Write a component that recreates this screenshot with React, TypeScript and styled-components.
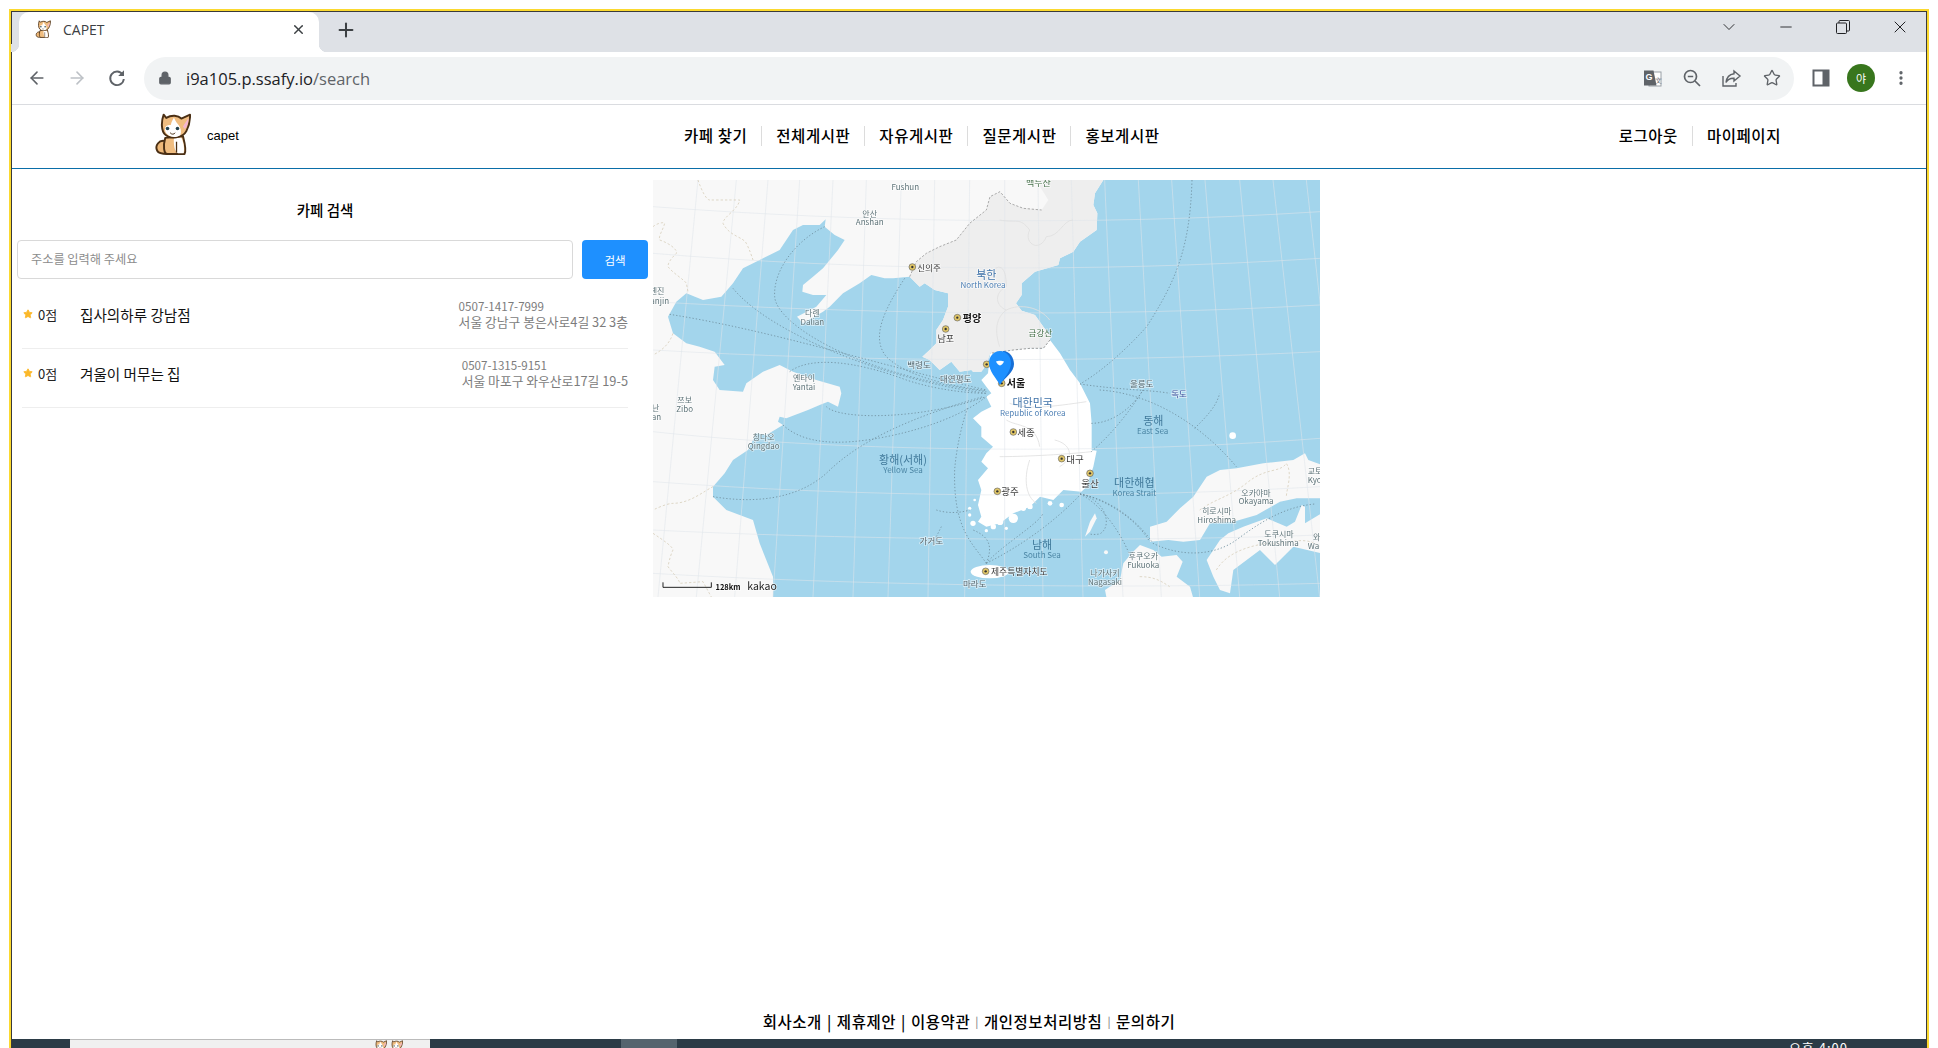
import React from 'react';
import styled, { createGlobalStyle } from 'styled-components';
import { ArrowLeft, ArrowRight, ChevronDown, Lock, Minus, MoreVertical, Plus, Star, X } from 'lucide-react';

const GlobalStyle = createGlobalStyle`
  html, body {
    margin: 0;
    padding: 0;
    height: 100%;
    overflow: hidden;
    background: #ffffff;
  }
  * {
    box-sizing: border-box;
  }
`;

const KR = `'Noto Sans CJK KR', 'Liberation Sans', sans-serif`;

const Outer = styled.div`
  width: 1920px;
  height: 1039px;
  margin: 9px 0 0 9px;
  border: 2px solid #fbd92f;
  border-bottom: 0;
`;

const Inner = styled.div`
  height: 100%;
  display: flex;
  flex-direction: column;
  border: 1px solid #3a3a3a;
  border-bottom: 0;
  background: #fff;
`;

const TabStrip = styled.div`
  height: 40px;
  flex: none;
  display: flex;
  align-items: flex-end;
  padding-left: 7px;
  background: #dee1e6;
`;

const Tab = styled.div`
  position: relative;
  width: 300px;
  height: 40px;
  display: flex;
  align-items: center;
  padding: 0 13px 6px 16px;
  background: #fff;
  border-radius: 10px 10px 0 0;
  font: 14px 'Open Sans', sans-serif;
  color: #3c4043;

  &::before,
  &::after {
    content: '';
    position: absolute;
    bottom: 0;
    width: 8px;
    height: 8px;
  }
  &::before {
    left: -8px;
    background: radial-gradient(circle at 0 0, #dee1e6 8px, #fff 8.5px);
  }
  &::after {
    right: -8px;
    background: radial-gradient(circle at 100% 0, #dee1e6 8px, #fff 8.5px);
  }
`;

const TabTitle = styled.span`
  flex: 1;
  margin-left: 12px;
`;

const NewTab = styled.div`
  width: 40px;
  height: 36px;
  margin: -5px 0 0 7px;
  align-self: center;
  display: flex;
  align-items: center;
  justify-content: center;
  color: #3c4043;
`;

const WindowControls = styled.div`
  margin: 0 -2px 0 auto;
  align-self: flex-start;
  height: 30px;
  display: flex;
  align-items: center;
  color: #202124;
`;

const WindowButton = styled.div`
  width: 57px;
  display: flex;
  justify-content: center;
`;

const Toolbar = styled.div`
  height: 53px;
  flex: none;
  display: flex;
  align-items: center;
  padding: 0 3px 0 5px;
  background: #fff;
  border-bottom: 1px solid #dadce0;
  color: #5f6368;
`;

const ToolButton = styled.div<{ $muted?: boolean }>`
  width: 40px;
  height: 36px;
  flex: none;
  display: flex;
  align-items: center;
  justify-content: center;
  color: ${(p) => (p.$muted ? '#bdc1c6' : '#5f6368')};
`;

const Omnibox = styled.div`
  width: 1650px;
  height: 43px;
  flex: none;
  margin: 0 7px;
  padding: 0 2px 0 14px;
  display: flex;
  align-items: center;
  background: #f1f3f4;
  border-radius: 22px;
`;

const Url = styled.div`
  flex: 1;
  margin-left: 14px;
  font: 16.5px 'Open Sans', sans-serif;
  color: #202124;

  span {
    color: #5f6368;
  }
`;

const Avatar = styled.div`
  width: 28px;
  height: 28px;
  border-radius: 50%;
  display: flex;
  align-items: center;
  justify-content: center;
  background: #38761d;
  color: #fff;
  font: 11px ${KR};
`;

const SiteHeader = styled.header`
  height: 64px;
  flex: none;
  display: flex;
  align-items: center;
  justify-content: space-between;
  padding: 0 131px 2px 143px;
  border-bottom: 1px solid #0a6ea8;
  font-family: ${KR};
  color: #000;
`;

const Brand = styled.div`
  display: flex;
  align-items: center;
  gap: 16px;
  font: 13px 'Liberation Sans', sans-serif;
`;

const BrandLogo = styled.div`
  display: flex;
  margin: -4px 0 0 -1px;
`;

const NavList = styled.nav`
  display: flex;
  align-items: center;
`;

const NavItem = styled.a`
  height: 20px;
  padding: 0 14px 2px;
  display: flex;
  align-items: center;
  font-size: 15.5px;
  font-weight: 500;
  letter-spacing: 0.55px;
  border-right: 1px solid #dcdcdc;

  &:last-child {
    border-right: 0;
  }
`;

const Main = styled.main`
  flex: 1;
  min-height: 0;
  display: flex;
  align-items: flex-start;
  padding-top: 11px;
  font-family: ${KR};
`;

const SearchPanel = styled.section`
  width: 641px;
  flex: none;
`;

const PanelTitle = styled.h2`
  margin: 0;
  height: 60px;
  padding: 20px 15px 0 0;
  text-align: center;
  font-size: 14.5px;
  line-height: 20px;
  font-weight: 500;
  color: #000;
`;

const SearchRow = styled.div`
  display: flex;
  gap: 9px;
  padding: 0 5px;
`;

const AddressInput = styled.input`
  width: 556px;
  height: 39px;
  padding: 0 12px 2px 13px;
  border: 1px solid #d9d9d9;
  border-radius: 4px;
  outline: none;
  font: 12.2px ${KR};

  &::placeholder {
    color: #8c8c8c;
  }
`;

const SearchButton = styled.button`
  width: 66px;
  height: 39px;
  padding: 0;
  border: 0;
  border-radius: 4px;
  background: #1e90ff;
  color: #fff;
  font: 11.5px ${KR};
`;

const ResultList = styled.ul`
  list-style: none;
  margin: 11px 25px 0 10px;
  padding: 0;
`;

const ResultRow = styled.li`
  height: 59px;
  display: flex;
  align-items: center;
  padding-bottom: 10px;
  border-bottom: 1px solid #eeeeee;
`;

const Rating = styled.div`
  width: 58px;
  display: flex;
  align-items: center;
  gap: 5px;
  padding-left: 1px;
  font-size: 13px;
  color: #222;
`;

const CafeName = styled.div`
  flex: 1;
  font-size: 14.6px;
  color: #111;
`;

const CafeInfo = styled.div`
  font-size: 12.8px;
  line-height: 15px;
  color: #7c7c7c;
`;

const CafePhone = styled.div`
  font-size: 11.6px;
`;

const MapFrame = styled.svg`
  width: 667px;
  height: 417px;
  flex: none;
  display: block;
  background: #a3d5ec;
  filter: blur(0.3px);
`;

const SiteFooter = styled.footer`
  height: 36px;
  flex: none;
  display: flex;
  align-items: flex-start;
  justify-content: center;
  font: 500 15.5px/36px ${KR};
  letter-spacing: 0.55px;
  color: #000;
`;

const FooterBar = styled.span<{ $light?: boolean }>`
  margin: 0 5px;
  color: ${(p) => (p.$light ? '#8a8a8a' : '#000')};
  font-size: ${(p) => (p.$light ? '11px' : 'inherit')};
`;

const Taskbar = styled.div`
  height: 9px;
  flex: none;
  display: flex;
  overflow: hidden;
  padding-left: 58px;
  background: #2b3b46;
`;

const TaskSearch = styled.div`
  width: 360px;
  height: 9px;
  display: flex;
  gap: 2px;
  padding-left: 303px;
  background: #f0f0f0;
  border-top: 1px solid #bbb;
`;

const TaskActive = styled.div`
  width: 56px;
  margin-left: 191px;
  background: #55646e;
`;

const TaskClock = styled.div`
  margin-left: auto;
  padding-right: 78px;
  font: 13px/17px ${KR};
  letter-spacing: 1px;
  color: #fff;
`;

const Cat = ({ width, height }: { width: number; height: number }) => (
  <svg width={width} height={height} viewBox="70 22 115 132">
    <g stroke="#4a2f14" strokeWidth="6" strokeLinejoin="round">
      <path d="M105 110C85 105 72 125 80 140C85 150 100 150 112 150Z" fill="#eeb878" />
      <path d="M105 100C98 125 100 150 112 150L165 150C172 140 165 115 160 95Z" fill="#f0bd80" />
      <path d="M132 100C130 120 135 148 145 148L162 148C166 130 160 110 155 100Z" fill="#fff" strokeWidth="0" />
      <path d="M100 28L108 38C125 28 145 30 155 40L182 28C183 55 175 70 170 80C160 100 120 105 105 90C92 78 92 50 100 28Z" fill="#f0bd80" />
    </g>
    <path d="M108 86C100 70 105 58 122 60C125 48 130 42 132 37C140 60 160 65 152 92C135 102 118 98 108 86Z" fill="#fff" />
    <path d="M160 65C165 55 174 45 177 38C178 55 170 70 165 72Z" fill="#f4b6d0" />
    <circle cx="112" cy="71" r="5.5" fill="#24414d" />
    <circle cx="143" cy="71" r="5.5" fill="#24414d" />
    <path d="M120 84C125 90 132 90 136 84" fill="none" stroke="#4a2f14" strokeWidth="3" />
    <path d="M140 112V146" stroke="#4a2f14" strokeWidth="4" />
  </svg>
);

const Reload = () => (
  <svg width="18" height="18" viewBox="0 0 18 18" fill="none">
    <path d="M14.6 5.4A6.8 6.8 0 1 0 15.8 10" stroke="#5f6368" strokeWidth="1.9" />
    <path d="M16 1.2V7h-5.8z" fill="#5f6368" />
  </svg>
);

const Translate = () => (
  <svg width="19" height="19" viewBox="0 0 19 19">
    <rect x="6" y="3" width="12" height="14" fill="#fff" stroke="#9aa0a6" />
    <path d="M1 1.5h9.5l3 15H1z" fill="#5f6368" />
    <text x="2.6" y="11" fontSize="9" fontWeight="700" fill="#fff" fontFamily="Liberation Sans">G</text>
    <text x="12" y="14" fontSize="6.5" fill="#5f6368" fontFamily="Liberation Sans">文</text>
  </svg>
);

const ZoomOutIcon = () => (
  <svg width="18" height="18" viewBox="0 0 18 18" fill="none" stroke="#5f6368" strokeWidth="1.7">
    <circle cx="7.5" cy="7.5" r="6" />
    <path d="M12 12l5 5M4.8 7.5h5.4" />
  </svg>
);

const ShareIcon = () => (
  <svg width="20" height="18" viewBox="0 0 20 18" fill="none" stroke="#5f6368" strokeWidth="1.4">
    <path d="M1 7v10h13v-3" />
    <path d="M12 2l6 5-6 5V9.2C8 9 5.5 10.5 4 13.5 4.6 8.5 7.5 5.4 12 4.8z" />
  </svg>
);

const SidePanelIcon = () => (
  <svg width="18" height="18" viewBox="0 0 18 18">
    <rect x="0.5" y="0.5" width="17" height="17" fill="#5f6368" />
    <rect x="2.5" y="2.5" width="8" height="13" fill="#fff" />
  </svg>
);

const RestoreIcon = () => (
  <svg width="14" height="14" viewBox="0 0 14 14" fill="none" stroke="#202124">
    <rect x="0.5" y="3" width="10" height="10.5" rx="1" />
    <path d="M3 3V1.5a1 1 0 0 1 1-1h8.5a1 1 0 0 1 1 1V10a1 1 0 0 1-1 1H10.5" />
  </svg>
);

// map data is in 3x map pixels, the group below scales it back down
const eastNorth = [[1351,0],[1326,40],[1321,75],[1333,100],[1331,150],[1281,185],[1261,215],[1221,235],[1216,255],[1146,275],[1106,310],[1106,345],[1089,370],[1106,392],[1146,405],[1171,440],[1192,468]];
const dmz = [[1191,480],[1171,505],[1131,505],[1081,510],[1011,520]];
const westNorth = [[1000,555],[985,575],[960,575],[955,570],[920,575],[895,545],[860,570],[830,540],[808,530],[830,510],[850,490],[850,450],[870,420],[885,380],[885,340],[845,330],[815,310],[800,320],[770,290]];
const yaluBorder = [[790,245],[820,220],[860,200],[910,180],[950,130],[1000,90],[1011,50],[1041,35],[1071,70],[1111,85],[1166,90],[1186,60],[1161,20],[1161,0]];
const chinaCoast = [[720,295],[695,295],[655,285],[620,310],[570,340],[530,380],[510,395],[450,430],[432,410],[490,380],[520,345],[480,345],[448,335],[450,315],[480,290],[510,265],[555,210],[575,180],[545,165],[515,140],[518,118],[500,135],[450,135],[420,150],[380,210],[320,240],[270,265],[240,310],[205,350],[150,360],[100,340],[70,365],[45,410],[60,460],[100,490],[140,500],[185,515],[215,555],[185,560],[180,600],[200,630],[270,635],[280,610],[330,575],[380,555],[420,575],[490,600],[560,620],[565,640],[555,680],[525,665],[500,675],[465,690],[400,715],[380,710],[375,725],[390,735],[340,765],[310,760],[285,810],[240,840],[215,880],[180,920],[180,950],[220,990],[300,1020],[320,1090],[360,1190],[360,1251]];
const eastSouth = [[1221,520],[1251,570],[1281,610],[1291,630],[1311,670],[1316,730],[1316,810],[1331,812],[1321,860],[1301,920],[1285,935],[1231,930],[1201,960],[1161,950],[1131,980],[1081,1000],[1041,1030],[1000,1040]];
const westSouth = [[975,1025],[985,1010],[975,975],[985,930],[975,900],[1005,865],[985,845],[1000,820],[1020,800],[985,770],[985,740],[960,715],[985,695],[1015,680],[1000,650],[1015,640],[1000,620],[985,600],[1005,580]];
const honshu = [[510,410],[560,395],[600,355],[640,320],[680,260],[720,240],[770,235],[850,220],[940,210],[975,190],[985,210],[1025,225],[1025,325],[950,325],[900,335],[830,375],[760,395],[690,400],[660,450],[610,455],[565,450],[510,455]];
const kyushu = [[480,465],[520,480],[545,500],[590,495],[608,515],[590,560],[630,590],[640,625],[380,625],[375,600],[420,570],[430,520],[455,490]];
const shikoku = [[680,510],[720,450],[745,430],[790,410],[860,385],[920,410],[945,395],[965,345],[975,350],[975,400],[1025,370],[1025,490],[940,470],[885,525],[840,480],[760,540],[750,610],[720,600],[700,560]];
const tsushima = [[345,370],[330,395],[315,440],[330,425],[350,385]];

const islets = [[1081,1015,14],[1041,1025,10],[1111,985,8],[1131,980,8],[1191,970,7],[1226,975,7],[1021,1040,8],[960,1030,8],[950,1005,5],[950,985,5],[965,960,4],[1060,1045,5],[1000,1052,5]];

const points = (pts: number[][], dx = 0, dy = 0) => pts.map(([x, y]) => `${x + dx},${y + dy}`).join(' ');

const landWest = [[0,0],...eastNorth,...dmz,...westNorth,...chinaCoast,[0,1251]];
const landNorth = [[770,290],...yaluBorder,...eastNorth,...dmz,...westNorth];
const landSouth = [...[...dmz].reverse(),...eastSouth,...westSouth];

const gridLines = [
  'M0 80C600 125 1300 140 2001 95',
  'M0 220C600 270 1300 280 2001 235',
  'M0 365C600 400 1300 415 2001 375',
  'M0 510C600 545 1300 550 2001 515',
  'M0 755C500 810 1300 830 2001 775',
  'M0 905C600 950 1300 960 2001 920',
  'M0 1050C500 1075 1300 1090 2001 1065',
  'M0 1180C500 1210 1300 1230 2001 1210',
];

const meridians = [[135,15],[250,130],[345,245],[440,360],[540,480],[640,600],[745,705],[845,825],[950,935],[1055,1055],[1155,1170],[1255,1290],[1355,1410],[1456,1525],[1556,1640],[1656,1760],[1760,1880],[1860,2000],[1960,2100]];

const seaRoutes = [
  'M240 325C350 460 700 600 1000 640',
  'M515 140C430 180 360 270 365 350C370 430 600 580 1000 635',
  'M50 403C350 450 700 560 1000 630',
  'M755 295C700 380 650 470 700 530C760 590 900 620 1000 632',
  'M410 575C470 530 600 540 760 600C850 630 950 640 1000 640',
  'M520 680C560 720 800 720 1000 650',
  'M390 735C450 790 550 800 700 770C850 740 950 690 1000 650',
  'M180 950C300 970 430 960 520 880C620 780 780 710 990 650',
  'M1000 1150C960 1090 900 1050 905 870C910 800 930 720 945 680',
  'M1000 1150C1020 1100 1010 1070 960 1050',
  'M1000 1150C1100 1100 1200 1030 1281 945',
  'M1000 1150C1040 1100 1160 1030 1170 1000',
  'M850 990C880 1000 920 1000 950 990',
  'M850 1070L865 1040',
  'M1617 0C1611 200 1571 300 1481 440C1401 530 1321 590 1281 612',
  'M1281 612C1400 630 1500 630 1550 640',
  'M1315 815C1380 760 1440 680 1470 630',
  'M1315 730C1380 730 1440 680 1470 630',
  'M1340 630C1500 640 1650 740 1750 860',
  'M1625 745C1660 710 1690 680 1700 640',
  'M1281 942C1380 960 1460 1030 1500 1090C1580 1130 1680 1130 1750 1080C1830 1020 1900 980 1985 972',
  'M1281 942C1340 970 1400 1050 1430 1125',
  'M1281 942C1360 960 1380 1040 1340 1062C1320 1065 1310 1062 1310 1062',
  'M1281 942C1330 950 1440 1000 1490 1085',
];

const provinceLines = [
  'M1040 120C1090 130 1100 110 1130 150C1110 190 1160 220 1180 170C1220 170 1230 120 1260 120',
  'M1000 290C1040 240 1060 260 1060 320C1020 340 1030 380 1060 390C1020 420 1030 470 1040 500',
  'M1060 390C1100 370 1160 380 1190 420',
  'M1070 670C1120 690 1200 680 1300 665',
  'M1040 830C1100 830 1220 825 1316 815',
  'M1130 840C1110 900 1120 950 1150 970',
  'M1205 780C1250 790 1270 830 1220 860',
  'M1060 720C1090 740 1150 730 1160 800',
];

const landBorders = [
  'M135 0C145 30 160 60 170 60C200 60 260 60 260 60C255 90 210 110 210 130C230 170 270 170 280 190C290 210 295 225 300 240',
  'M0 140C10 130 35 125 35 130C30 150 15 170 20 180C50 190 75 210 70 220C50 240 45 250 45 260C60 280 95 300 100 310L105 335',
  'M60 460C50 490 30 510 0 525',
  'M180 920C150 935 110 970 60 970C40 970 0 990 0 990',
  'M0 1060C30 1080 60 1100 60 1110C50 1130 45 1160 45 1160C60 1180 80 1200 80 1210L150 1205L175 1251',
  'M1640 990C1680 960 1730 950 1780 910C1840 860 1880 880 1900 850C1920 880 1900 930 1900 950',
  'M1690 1170C1720 1120 1780 1100 1840 1090C1890 1100 1950 1060 2001 1100',
  'M1460 1190C1500 1190 1520 1200 1550 1220',
];

type MapLabel = [string, number, number, number, string, number?];

const LAND = '#5f7479';
const CITY = '#3c3c3c';
const STATE = '#3f72a8';
const STATE_EN = '#4f80b5';
const SEA = '#40799a';
const SEA_EN = '#4b85a4';
const ISLE = '#55666e';

const mapLabels: MapLabel[] = [
  ['Fushun', 757, 18, 8, LAND],
  ['백두산', 1156, 8, 9, '#46704a'],
  ['안산', 650, 100, 8, LAND],
  ['Anshan', 650, 124, 8, LAND],
  ['신의주', 828, 261, 8.5, CITY],
  ['북한', 1000, 282, 11, STATE],
  ['North Korea', 990, 313, 8, STATE_EN],
  ['평양', 957, 413, 10, '#111', 700],
  ['남포', 878, 476, 9, CITY],
  ['다롄', 478, 397, 8, LAND],
  ['Dalian', 478, 423, 8, LAND],
  ['톈진', 12, 332, 8, LAND],
  ['anjin', 20, 360, 8, LAND],
  ['옌타이', 453, 592, 8, LAND],
  ['Yantai', 453, 618, 8, LAND],
  ['백령도', 798, 553, 8.5, ISLE],
  ['대연평도', 908, 593, 8.5, ISLE],
  ['금강산', 1162, 457, 8.5, '#46704a'],
  ['서울', 1089, 608, 10, '#111', 700],
  ['울릉도', 1466, 608, 8.5, ISLE],
  ['독도', 1578, 638, 8.5, '#3b4f9c'],
  ['쯔보', 95, 658, 8, LAND],
  ['Zibo', 95, 684, 8, LAND],
  ['난', 8, 682, 8, LAND],
  ['an', 10, 708, 8, LAND],
  ['칭다오', 332, 769, 8, LAND],
  ['Qingdao', 332, 796, 8, LAND],
  ['황해(서해)', 750, 838, 11, SEA],
  ['Yellow Sea', 750, 868, 8, SEA_EN],
  ['가거도', 835, 1080, 8.5, ISLE],
  ['마라도', 965, 1210, 8.5, ISLE],
  ['128km', 225, 1219, 7.5, '#111', 700],
  ['kakao', 327, 1216, 10.5, '#222'],
  ['대한민국', 1139, 666, 11, STATE],
  ['Republic of Korea', 1139, 698, 8, STATE_EN],
  ['세종', 1119, 756, 9.5, CITY],
  ['대구', 1266, 836, 9.5, CITY],
  ['울산', 1311, 908, 9.5, CITY],
  ['광주', 1071, 934, 9.5, CITY],
  ['동해', 1501, 720, 11, SEA],
  ['East Sea', 1499, 751, 8, SEA_EN],
  ['대한해협', 1444, 907, 11, SEA],
  ['Korea Strait', 1444, 938, 8, SEA_EN],
  ['남해', 1167, 1092, 11, SEA],
  ['South Sea', 1167, 1122, 8, SEA_EN],
  ['제주특별자치도', 1099, 1174, 8.8, CITY],
  ['후쿠오카', 1471, 1127, 8, LAND],
  ['Fukuoka', 1471, 1154, 8, LAND],
  ['나가사키', 1356, 1176, 8, LAND],
  ['Nagasaki', 1356, 1203, 8, LAND],
  ['히로시마', 1691, 991, 8, LAND],
  ['Hiroshima', 1691, 1018, 8, LAND],
  ['오카야마', 1809, 936, 8, LAND],
  ['Okayama', 1809, 962, 8, LAND],
  ['도쿠시마', 1878, 1060, 8, LAND],
  ['Tokushima', 1876, 1086, 8, LAND],
  ['교토', 1986, 872, 8, LAND],
  ['Kyo', 1985, 898, 8, LAND],
  ['와', 1991, 1070, 8, LAND],
  ['Wal', 1985, 1096, 8, LAND],
];

const cityDots = [[778,261],[913,413],[878,447],[1001,553],[1046,610],[1081,756],[1226,836],[1311,880],[1033,934],[998,1174]];

const KoreaMap = () => (
  <MapFrame viewBox="0 0 667 417">
    <g transform="scale(0.33333)">
      <polygon points={points(landWest)} fill="#f8f8f8" />
      <polygon points={points(landNorth)} fill="#eeeeee" />
      <polygon points={points(landSouth)} fill="#ffffff" />
      <polygon points={points(honshu, 981, 630)} fill="#f8f8f8" />
      <polygon points={points(kyushu, 981, 630)} fill="#f8f8f8" />
      <polygon points={points(shikoku, 981, 630)} fill="#f8f8f8" />
      <polygon points={points(tsushima, 981, 630)} fill="#f8f8f8" />
      <ellipse cx="1010" cy="1175" rx="57" ry="20" fill="#fff" />
      <circle cx="1739" cy="767" r="10" fill="#fff" />
      <circle cx="1359" cy="1117" r="6" fill="#f8f8f8" />
      {islets.map(([x, y, r]) => (
        <circle key={`${x}-${y}`} cx={x} cy={y} r={r} fill="#fff" />
      ))}
      <g fill="none">
        {gridLines.map((d) => (
          <path key={d} d={d} stroke="#dfe6ea" strokeOpacity="0.65" strokeWidth="2.5" />
        ))}
        {meridians.map(([top, bottom]) => (
          <path key={top} d={`M${top} 0L${bottom} 1251`} stroke="#dfe6ea" strokeOpacity="0.65" strokeWidth="2.5" />
        ))}
        {provinceLines.map((d) => (
          <path key={d} d={d} stroke="#e0e0e0" strokeWidth="2.5" />
        ))}
        {landBorders.map((d) => (
          <path key={d} d={d} stroke="#d9d0bd" strokeWidth="2.5" strokeDasharray="7 6" />
        ))}
        <path d={`M${points([[770,290],...yaluBorder.slice(0, 11)]).replace(/ /g, 'L')}`} stroke="#9c9c9c" strokeWidth="2.5" strokeDasharray="7 5" />
        <path d={`M${points(dmz).replace(/ /g, 'L')}`} stroke="#8c8c8c" strokeWidth="2.5" strokeDasharray="7 5" />
        {seaRoutes.map((d) => (
          <path key={d} d={d} stroke="#6f8f9f" strokeWidth="2.5" strokeDasharray="4 6" />
        ))}
        <path d="M30 1207V1222H175V1207" stroke="#222" strokeWidth="3" />
      </g>
      {cityDots.map(([x, y]) => (
        <circle key={`${x}-${y}`} cx={x} cy={y} r="10" fill="#e2c766" stroke="#666" strokeWidth="2" />
      ))}
      {cityDots.map(([x, y]) => (
        <circle key={`c${x}-${y}`} cx={x} cy={y} r="3.5" fill="#333" />
      ))}
    </g>
    {mapLabels.map(([text, x, y, size, color, weight]) => (
      <text
        key={`${text}-${x}`}
        x={x / 3}
        y={y / 3}
        fontSize={size}
        fill={color}
        fontWeight={weight ?? 400}
        fontFamily="'Noto Sans CJK KR', sans-serif"
        textAnchor="middle"
        dominantBaseline="central"
        stroke={color === SEA || color === SEA_EN ? 'none' : 'rgba(255,255,255,0.6)'}
        strokeWidth="1.5"
        paintOrder="stroke"
      >
        {text}
      </text>
    ))}
    <g transform="translate(336 171)">
      <path d="M14 0C21 0 25 7 25 13C25 21 17 26 10 34Z" fill="#176fd6" />
      <path d="M11 0C17 0 22 5 22 12C22 20 15 27 11 34C7 27 0 20 0 12C0 5 5 0 11 0Z" fill="#1e90ff" />
      <path d="M7 10.5C9 9.5 13 9.5 15 10.5C14 13 12.5 14 11 14.5C9.5 14 8 13 7 10.5Z" fill="#fff" />
    </g>
  </MapFrame>
);

const results = [
  { name: '집사의하루 강남점', phone: '0507-1417-7999', address: '서울 강남구 봉은사로4길 32 3층' },
  { name: '겨울이 머무는 집', phone: '0507-1315-9151', address: '서울 마포구 와우산로17길 19-5' },
];

const navItems = ['카페 찾기', '전체게시판', '자유게시판', '질문게시판', '홍보게시판'];

export default function App() {
  return (
    <Outer>
      <GlobalStyle />
      <Inner>
        <TabStrip>
          <Tab>
            <Cat width={16} height={18} />
            <TabTitle>CAPET</TabTitle>
            <X size={15} color="#3c4043" strokeWidth={2.4} />
          </Tab>
          <NewTab>
            <Plus size={22} strokeWidth={2.2} />
          </NewTab>
          <WindowControls>
            <WindowButton>
              <ChevronDown size={20} strokeWidth={1.1} />
            </WindowButton>
            <WindowButton>
              <Minus size={18} strokeWidth={1.2} />
            </WindowButton>
            <WindowButton>
              <RestoreIcon />
            </WindowButton>
            <WindowButton>
              <X size={20} strokeWidth={1.2} />
            </WindowButton>
          </WindowControls>
        </TabStrip>
        <Toolbar>
          <ToolButton>
            <ArrowLeft size={20} strokeWidth={1.9} />
          </ToolButton>
          <ToolButton $muted>
            <ArrowRight size={20} strokeWidth={1.9} />
          </ToolButton>
          <ToolButton>
            <Reload />
          </ToolButton>
          <Omnibox>
            <Lock size={14} fill="#5f6368" strokeWidth={2} />
            <Url>
              i9a105.p.ssafy.io<span>/search</span>
            </Url>
            <ToolButton>
              <Translate />
            </ToolButton>
            <ToolButton>
              <ZoomOutIcon />
            </ToolButton>
            <ToolButton>
              <ShareIcon />
            </ToolButton>
            <ToolButton>
              <Star size={18} strokeWidth={1.8} />
            </ToolButton>
          </Omnibox>
          <ToolButton>
            <SidePanelIcon />
          </ToolButton>
          <ToolButton>
            <Avatar>야</Avatar>
          </ToolButton>
          <ToolButton>
            <MoreVertical size={18} strokeWidth={2.4} />
          </ToolButton>
        </Toolbar>
        <SiteHeader>
          <Brand>
            <BrandLogo>
              <Cat width={37} height={44} />
            </BrandLogo>
            capet
          </Brand>
          <NavList>
            {navItems.map((item) => (
              <NavItem key={item}>{item}</NavItem>
            ))}
          </NavList>
          <NavList>
            <NavItem>로그아웃</NavItem>
            <NavItem>마이페이지</NavItem>
          </NavList>
        </SiteHeader>
        <Main>
          <SearchPanel>
            <PanelTitle>카페 검색</PanelTitle>
            <SearchRow>
              <AddressInput placeholder="주소를 입력해 주세요" />
              <SearchButton>검색</SearchButton>
            </SearchRow>
            <ResultList>
              {results.map((cafe) => (
                <ResultRow key={cafe.phone}>
                  <Rating>
                    <Star size={10} fill="#fbb829" color="#fbb829" />
                    0점
                  </Rating>
                  <CafeName>{cafe.name}</CafeName>
                  <CafeInfo>
                    <CafePhone>{cafe.phone}</CafePhone>
                    {cafe.address}
                  </CafeInfo>
                </ResultRow>
              ))}
            </ResultList>
          </SearchPanel>
          <KoreaMap />
        </Main>
        <SiteFooter>
          회사소개<FooterBar>|</FooterBar>제휴제안<FooterBar>|</FooterBar>이용약관<FooterBar $light>|</FooterBar>개인정보처리방침<FooterBar $light>|</FooterBar>문의하기
        </SiteFooter>
        <Taskbar>
          <TaskSearch>
            <Cat width={14} height={16} />
            <Cat width={14} height={16} />
          </TaskSearch>
          <TaskActive />
          <TaskClock>오후 4:00</TaskClock>
        </Taskbar>
      </Inner>
    </Outer>
  );
}
